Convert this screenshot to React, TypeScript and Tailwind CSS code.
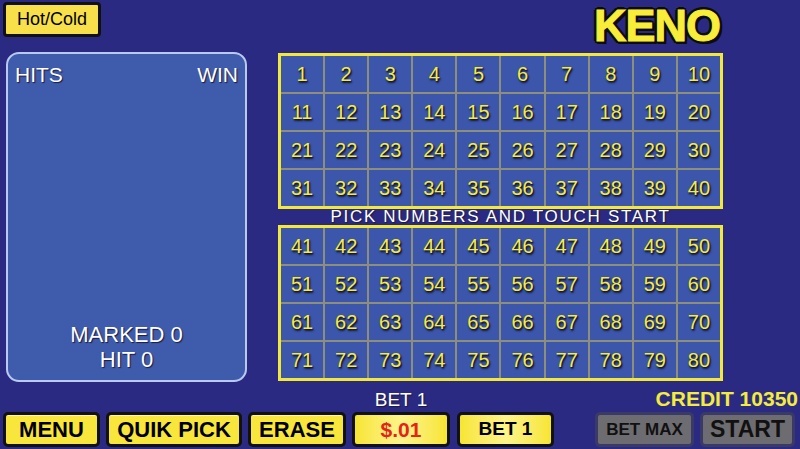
import React from "react"

const FONT = "font-['Liberation_Sans',Arial,sans-serif]"

const numShadow = "[text-shadow:1px_1px_1px_#16163a,1px_2px_2px_#16163a]"
const whiteShadow = "[text-shadow:1px_1px_1px_#1a1a40]"

function NumberGrid({ start }: { start: number }) {
  const nums = Array.from({ length: 40 }, (_, i) => start + i)
  return (
    <div className="border-[3px] border-[#f2e83c] bg-[#8e8e7c]">
      <div className="grid grid-cols-10 gap-[2px]">
        {nums.map((n) => (
          <div
            key={n}
            className={`h-[36px] bg-[#3b56aa] flex items-center justify-center text-[20px] text-[#f4ec44] ${numShadow}`}
          >
            {n}
          </div>
        ))}
      </div>
    </div>
  )
}

const yellowBtn =
  "h-[35px] rounded-[5px] border-[3px] border-[#111] bg-[#f8e63c] flex items-center justify-center font-bold text-black text-[22px] shadow-[inset_0_1px_0_#fff7a0]"
const brightBtn =
  "h-[35px] rounded-[5px] border-[3px] border-[#111] bg-gradient-to-r from-[#f7e52e] via-[#fdf488] to-[#f7e52e] flex items-center justify-center font-bold"
const grayBtn =
  "h-[35px] rounded-[5px] border-[3px] border-[#3a3a66] bg-[#6d6c70] flex items-center justify-center font-bold text-[#111]"

export default function App() {
  return (
    <div className={`w-[800px] h-[449px] bg-[#2b2a82] flex flex-col overflow-hidden ${FONT}`}>
      {/* top bar */}
      <div className="h-[52px] flex items-start justify-between">
        <button className="mt-[2px] ml-[3px] w-[98px] h-[35px] rounded-[4px] border-[3px] border-[#111] bg-[#f8e04a] text-[18px] text-black flex items-center justify-center">
          Hot/Cold
        </button>
        <div className="mr-[80px] mt-[6px] text-[45px] leading-[40px] font-bold tracking-[-1px] text-[#f8ee3a] [-webkit-text-stroke:1px_#f8ee3a] [text-shadow:3px_0_#0c0c0c,-3px_0_#0c0c0c,0_3px_#0c0c0c,0_-3px_#0c0c0c,2px_2px_#0c0c0c,-2px_-2px_#0c0c0c,2px_-2px_#0c0c0c,-2px_2px_#0c0c0c,3px_3px_#0c0c0c]">
          KENO
        </div>
      </div>

      {/* main */}
      <div className="h-[330px] flex">
        <div className="ml-[6px] w-[241px] h-[330px] rounded-[13px] border-2 border-[#b9c9f2] bg-[#3f5bab] flex flex-col justify-between px-[7px] pt-[9px] pb-[8px] text-white">
          <div className={`flex justify-between text-[21px] leading-[24px] ${whiteShadow}`}>
            <span>HITS</span>
            <span>WIN</span>
          </div>
          <div className={`text-center text-[22px] leading-[25px] ${whiteShadow}`}>
            <div>MARKED 0</div>
            <div>HIT 0</div>
          </div>
        </div>

        <div className="ml-[31px] w-[445px] pt-[1px] flex flex-col">
          <NumberGrid start={1} />
          <div className={`h-[16px] flex items-center justify-center text-white text-[17px] tracking-[1.7px] ${whiteShadow}`}>
            PICK NUMBERS AND TOUCH START
          </div>
          <NumberGrid start={41} />
        </div>
      </div>

      {/* bottom */}
      <div className="flex-1 flex items-end pb-[2px] pl-[3px]">
        <div className="flex items-end gap-[6px]">
          <button className={`${yellowBtn} w-[97px]`}>MENU</button>
          <button className={`${yellowBtn} w-[136px]`}>QUIK PICK</button>
          <button className={`${yellowBtn} w-[98px]`}>ERASE</button>
          <div className="flex flex-col items-center">
            <div className={`text-white text-[19px] leading-[22px] mb-[1px] ${whiteShadow}`}>BET 1</div>
            <button className={`${brightBtn} w-[98px] text-[21px] text-[#e5231a]`}>$.01</button>
          </div>
          <button className={`${brightBtn} w-[97px] ml-[1px] text-[19px] text-black`}>BET 1</button>
        </div>
        <div className="ml-auto mr-[5px] flex flex-col items-end">
          <div className="text-[#f4ec3c] font-bold text-[21px] leading-[24px] mb-[1px] mr-[-3px]">CREDIT 10350</div>
          <div className="flex gap-[6px]">
            <button className={`${grayBtn} w-[99px] text-[17px]`}>BET MAX</button>
            <button className={`${grayBtn} w-[95px] text-[23px]`}>START</button>
          </div>
        </div>
      </div>
    </div>
  )
}
